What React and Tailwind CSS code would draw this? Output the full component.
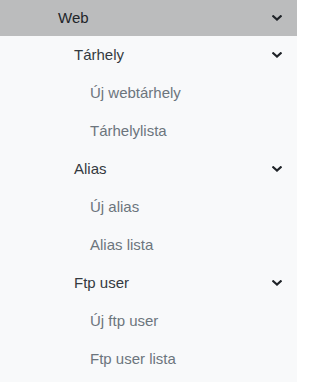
import React from 'react'

const Chevron = () => (
  <svg viewBox="0 0 10 6" className="h-[6px] w-[10px]" fill="none">
    <path d="M1.3 1.2 L5 4.6 L8.7 1.2" stroke="#1f2328" strokeWidth="2.1" strokeLinecap="square" />
  </svg>
)

const groups = [
  { title: 'Tárhely', items: ['Új webtárhely', 'Tárhelylista'] },
  { title: 'Alias', items: ['Új alias', 'Alias lista'] },
  { title: 'Ftp user', items: ['Új ftp user', 'Ftp user lista'] }
]

export default function App() {
  return (
    <div
      className="h-[382px] w-[297px] overflow-hidden bg-[#f8f9fa] text-[15px]"
      style={{ fontFamily: '"Liberation Sans", Arial, sans-serif' }}
    >
      <div className="flex h-9 items-center justify-between bg-[#bbbcbd] pl-[58px] pr-[15px] text-[#212529]">
        <span>Web</span>
        <Chevron />
      </div>
      {groups.map((group) => (
        <div key={group.title}>
          <div className="flex h-[38px] items-center justify-between pl-[74px] pr-[15px] text-[#343a40]">
            <span>{group.title}</span>
            <Chevron />
          </div>
          {group.items.map((item) => (
            <div key={item} className="flex h-[38px] items-center pl-[90px] text-[#6c757d]">
              {item}
            </div>
          ))}
        </div>
      ))}
    </div>
  )
}
